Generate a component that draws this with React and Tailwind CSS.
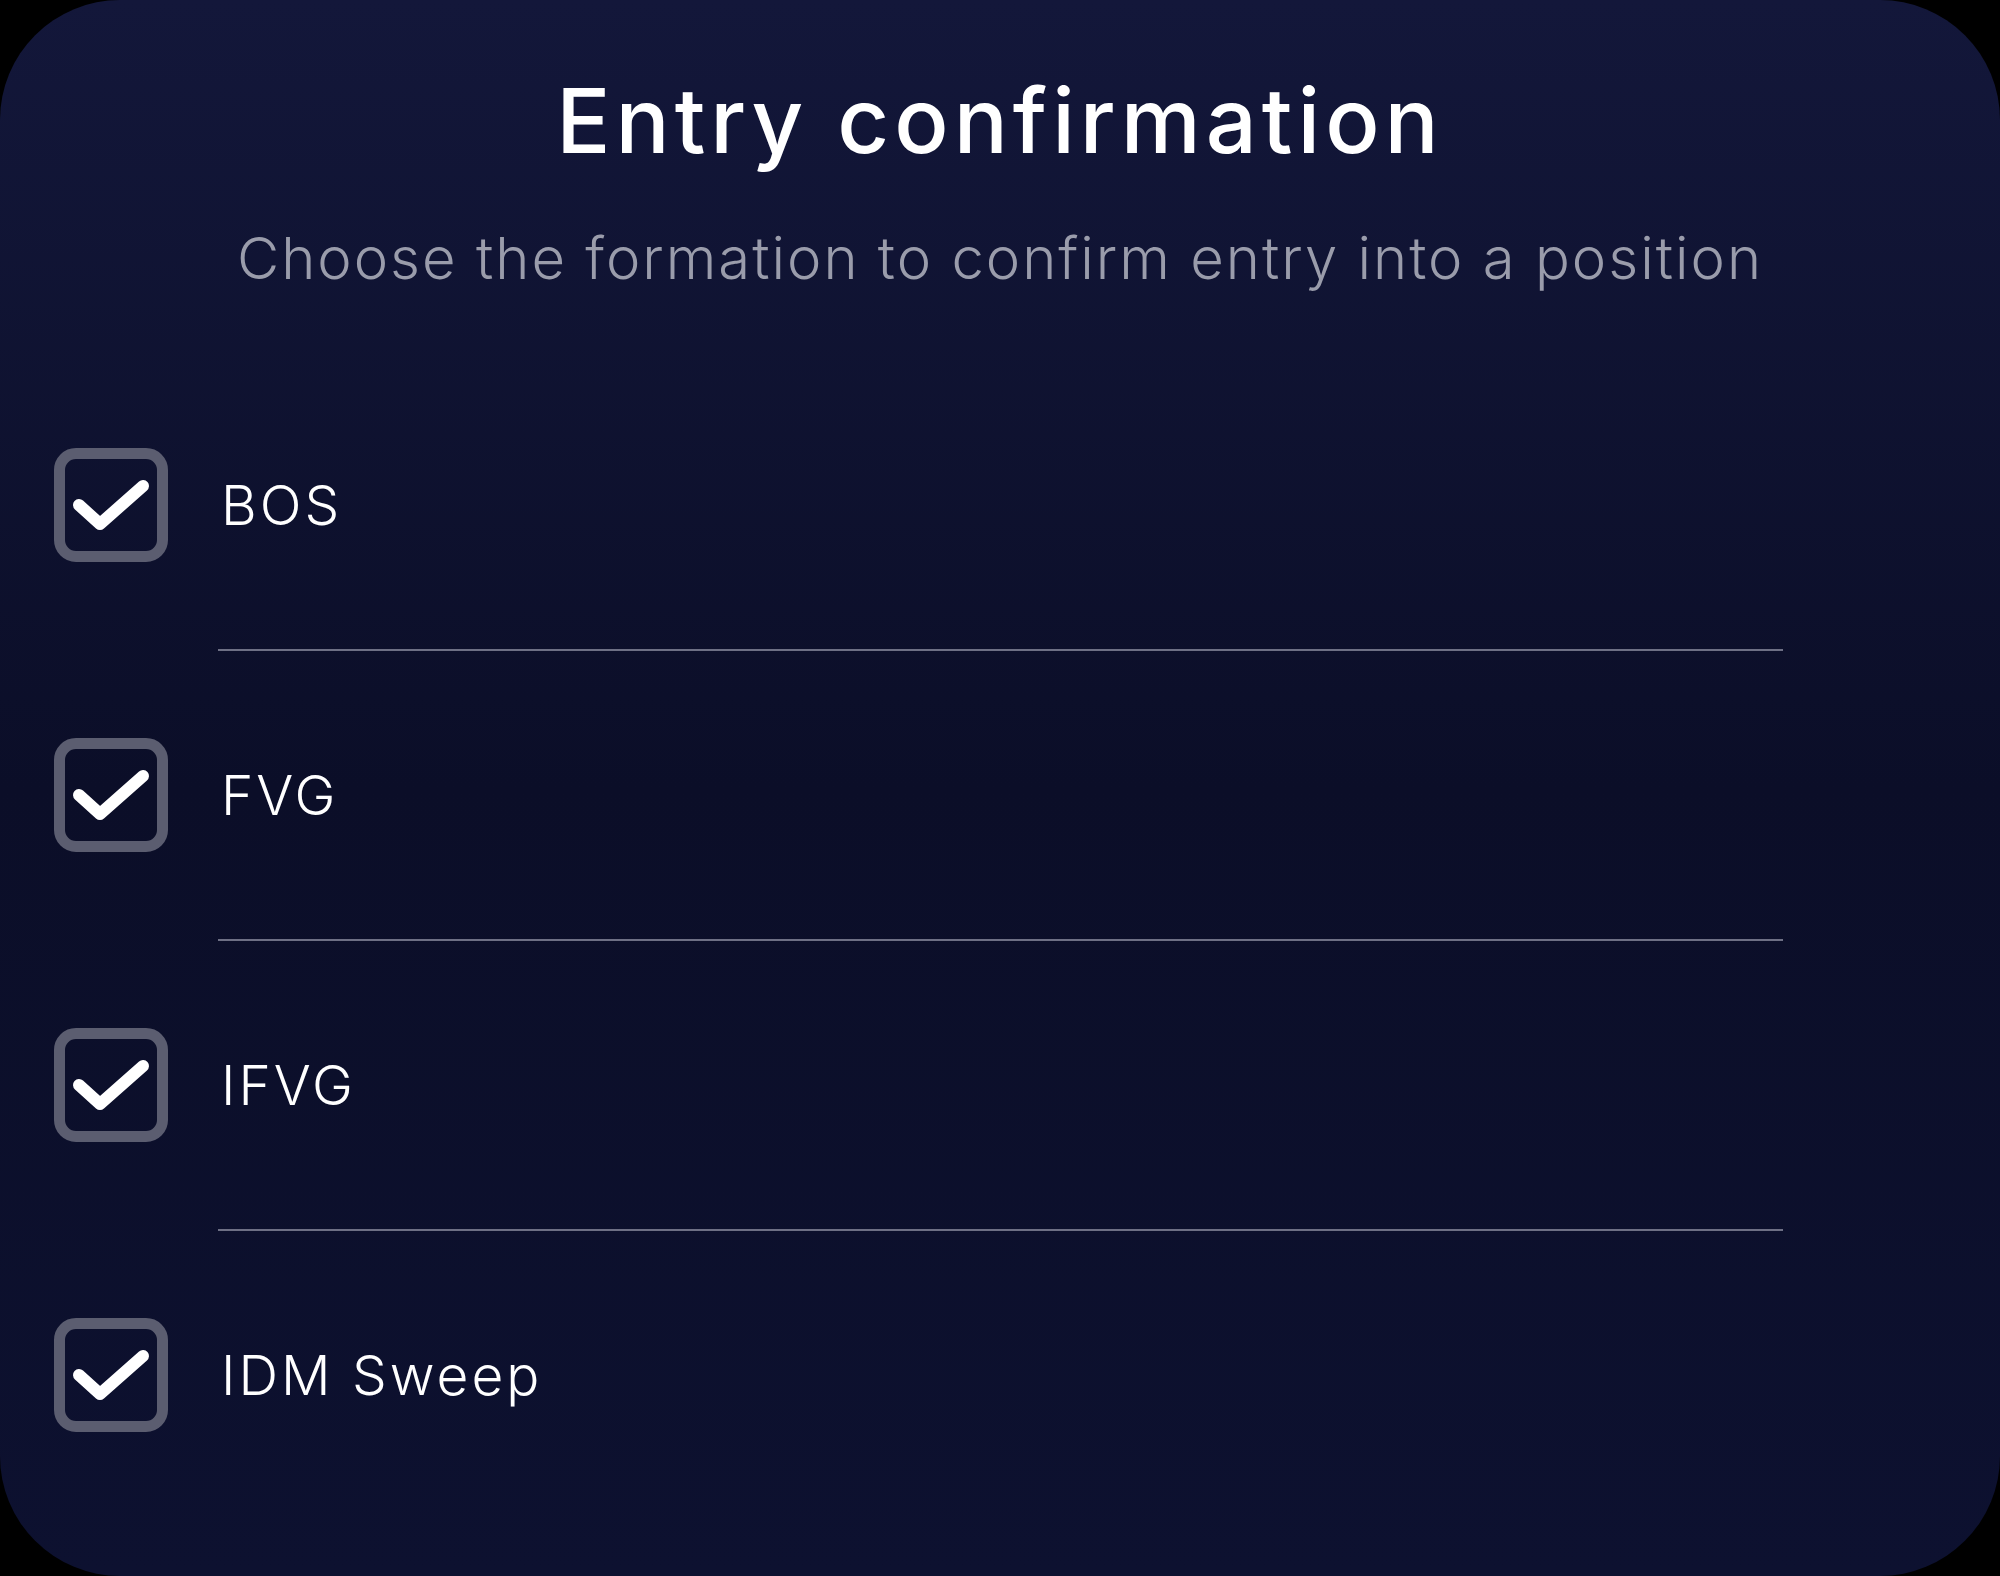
import { useState } from "react";

const items = ["BOS", "FVG", "IFVG", "IDM Sweep"];

function CheckBox({ checked, onToggle }) {
  return (
    <button
      onClick={onToggle}
      aria-label="toggle"
      className="w-[114px] h-[114px] shrink-0 rounded-[22px] border-[11px] border-[#5b5d70] flex items-center justify-center"
    >
      {checked && (
        <svg viewBox="0 0 92 92" className="w-[92px] h-[92px]" fill="none">
          <path d="M14 46 L35 65 L78 27" stroke="#ffffff" strokeWidth="12" strokeLinecap="round" strokeLinejoin="round" />
        </svg>
      )}
    </button>
  );
}

export default function App() {
  const [checked, setChecked] = useState(items.map(() => true));
  const toggle = (i) => setChecked((c) => c.map((v, j) => (j === i ? !v : v)));

  return (
    <div className="w-[2000px] h-[1576px] bg-black" style={{ fontFamily: "Inter, 'Noto Sans', sans-serif" }}>
      <div className="w-full h-full rounded-[120px] overflow-hidden bg-gradient-to-b from-[#13173a] via-[#0b0e28] to-[#0d1130] flex flex-col">
        {/* header */}
        <div className="flex flex-col items-center pt-[76px]">
          <h1 className="text-[90px] leading-none font-medium tracking-[5px] text-white">Entry confirmation</h1>
          <p className="mt-[63px] text-[58px] leading-none font-light tracking-[2px] text-[#9a9cab]">Choose the formation to confirm entry into a position</p>
        </div>

        {/* options */}
        <div className="mt-[74px] pl-[54px] pr-[217px] flex flex-col">
          {items.map((label, i) => (
            <div key={label} className="flex flex-col">
              {i > 0 && <div className="ml-[164px] h-[2px] bg-[#6e7085]" />}
              <div className="h-[288px] flex items-center gap-[53px]">
                <CheckBox checked={checked[i]} onToggle={() => toggle(i)} />
                <span className="text-[55px] leading-none font-light tracking-[3px] text-white">{label}</span>
              </div>
            </div>
          ))}
        </div>
      </div>
    </div>
  );
}
